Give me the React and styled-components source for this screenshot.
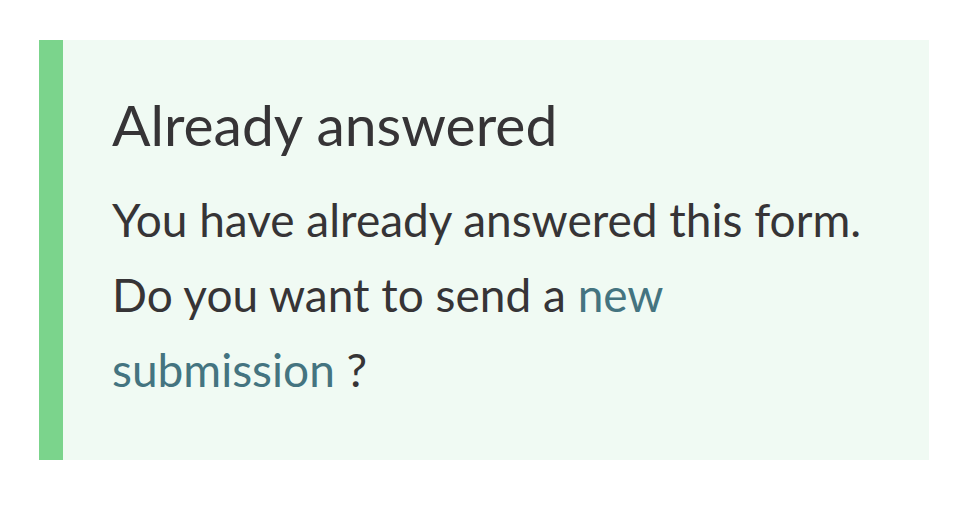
import React from 'react';
import styled, { createGlobalStyle } from 'styled-components';

const GlobalStyle = createGlobalStyle`
  html, body {
    margin: 0;
    padding: 0;
    background: #fff;
  }
  body {
    font-family: Lato, 'Open Sans', sans-serif;
  }
`;

const Page = styled.div`
  padding: 40px 43px 48px 39px;
`;

const Notice = styled.section`
  box-sizing: border-box;
  height: 420px;
  background-color: #f0faf3;
  border-left: 24px solid #7bd48c;
  padding: 48px 48px 0 49px;
  color: #363436;
`;

const Title = styled.h2`
  margin: 0 0 22px;
  font-size: 57px;
  font-weight: 400;
  line-height: 72px;
  color: #363436;
`;

const Text = styled.p`
  margin: 0;
  font-size: 46px;
  line-height: 75px;
`;

const Link = styled.a`
  color: #447480;
  text-decoration: none;
`;

export default function App() {
  return (
    <Page>
      <GlobalStyle />
      <Notice>
        <Title>Already answered</Title>
        <Text>You have already answered this form.</Text>
        <Text>
          Do you want to send a <Link href="#">new submission</Link> ?
        </Text>
      </Notice>
    </Page>
  );
}
